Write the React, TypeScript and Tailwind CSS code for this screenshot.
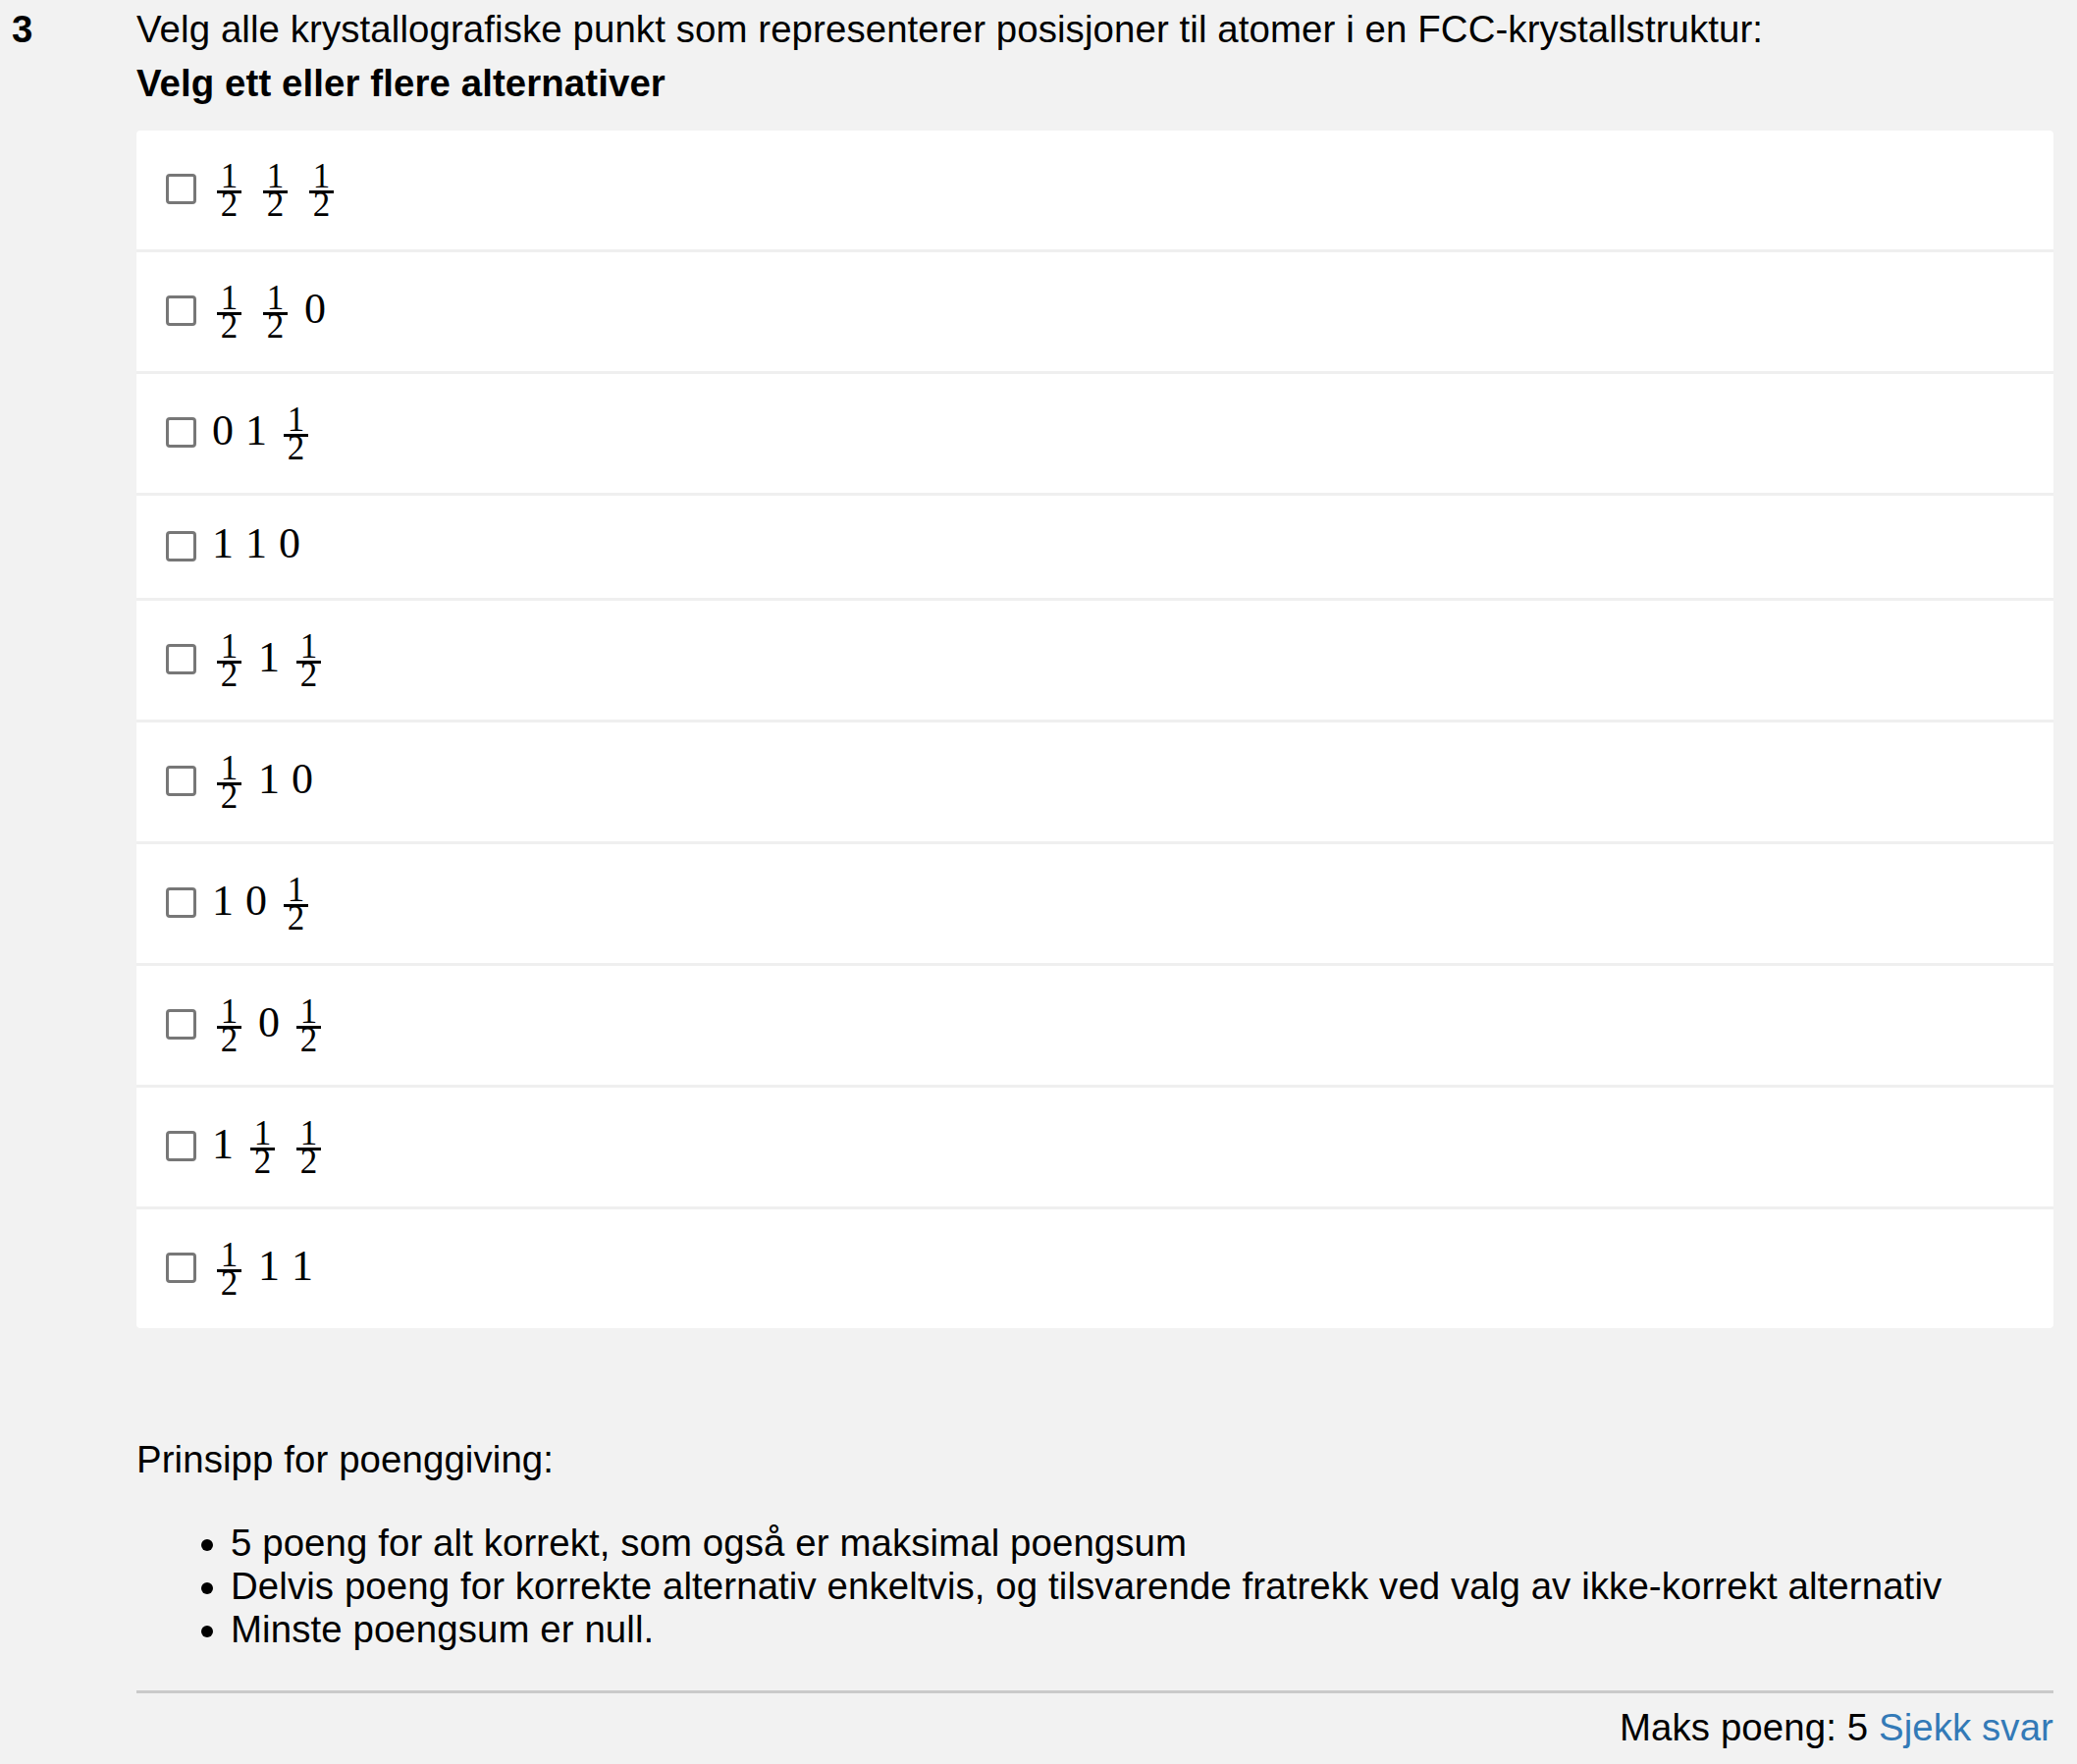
import React from "react";

type Item = "f" | "0" | "1";

const rows: Item[][] = [
  ["f", "f", "f"],
  ["f", "f", "0"],
  ["0", "1", "f"],
  ["1", "1", "0"],
  ["f", "1", "f"],
  ["f", "1", "0"],
  ["1", "0", "f"],
  ["f", "0", "f"],
  ["1", "f", "f"],
  ["f", "1", "1"],
];

function Frac() {
  return (
    <span className="flex h-[54px] w-[35px] flex-col items-center">
      <span className="block h-[26px] text-[35px] leading-[26px]">1</span>
      <span className="mt-[1px] block h-[3px] w-[25px] bg-black" />
      <span className="block h-[24px] text-[35px] leading-[24px]">2</span>
    </span>
  );
}

function Digit({ d }: { d: string }) {
  return (
    <span className="block h-[54px] w-[22px] text-center text-[44px] leading-[48px]">{d}</span>
  );
}

function Row({ items }: { items: Item[] }) {
  const hasFrac = items.includes("f");
  return (
    <label
      className={
        "flex items-center bg-white pl-[30px] " + (hasFrac ? "h-[121px]" : "h-[104px]")
      }
    >
      <span className="mb-[2px] block h-[31px] w-[31px] shrink-0 rounded-[4px] border-[3px] border-[#777777] bg-white" />
      <span className="ml-[16px] flex items-center gap-[12px] font-['Liberation_Serif',serif] tracking-normal text-black">
        {items.map((it, i) => (it === "f" ? <Frac key={i} /> : <Digit key={i} d={it} />))}
      </span>
    </label>
  );
}

export default function App() {
  return (
    <div className="min-h-screen bg-[#f2f2f2] font-['Liberation_Sans',Arial,sans-serif] text-[38.4px] leading-[44px] tracking-[0.1px] text-black">
      <div className="flex">
        <div className="w-[139px] shrink-0 pl-[12px] pt-[8px] font-bold">3</div>
        <div className="w-[1953px] pt-[8px]">
          <div>
            Velg alle krystallografiske punkt som representerer posisjoner til atomer i en FCC-krystallstruktur:
          </div>
          <div className="mt-[11px] font-bold">Velg ett eller flere alternativer</div>
          <div className="mt-[26px] flex flex-col gap-[3px] overflow-hidden rounded-[4px] bg-[#efefef]">
            {rows.map((r, i) => (
              <Row key={i} items={r} />
            ))}
          </div>
          <p className="mt-[112px]">Prinsipp for poenggiving:</p>
          <ul className="mt-[41px] list-disc pl-[96px]">
            <li>5 poeng for alt korrekt, som også er maksimal poengsum</li>
            <li>
              Delvis poeng for korrekte alternativ enkeltvis, og tilsvarende fratrekk ved valg av ikke-korrekt alternativ
            </li>
            <li>Minste poengsum er null.</li>
          </ul>
          <div className="mt-[40px] h-[3px] bg-[#cacaca]" />
          <div className="mt-[13px] text-right">
            Maks poeng: 5 <span className="text-[#337ab7]">Sjekk svar</span>
          </div>
        </div>
      </div>
    </div>
  );
}
